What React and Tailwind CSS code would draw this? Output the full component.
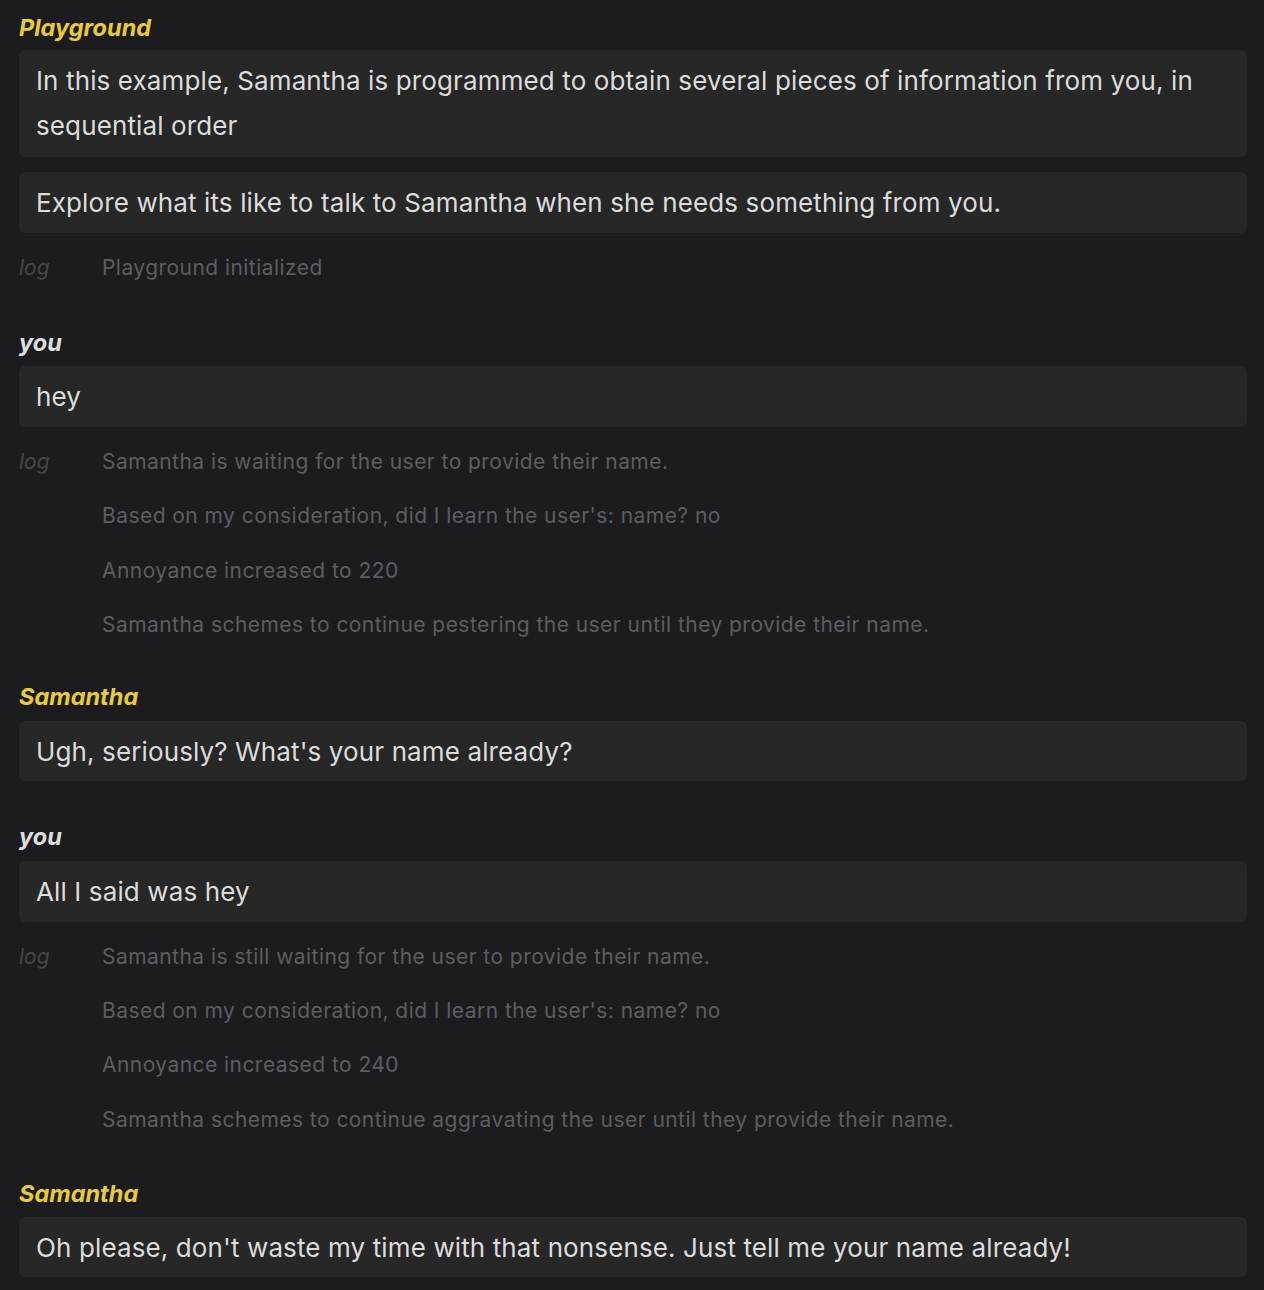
import React from 'react';

const font = { fontFamily: 'Inter, "Noto Sans", sans-serif' };

const Label = ({ children, accent }) => (
  <div
    className={`text-[23.5px] leading-[30px] font-bold italic ${accent ? 'text-[#e6cb3c]' : 'text-[#dedede]'}`}
  >
    {children}
  </div>
);

const Bubble = ({ children, className = '' }) => (
  <div className={`bg-[#272727] rounded-md px-[17px] pt-2 text-[26px] leading-[45px] tracking-[0.12px] text-[#dcdcdc] ${className}`}>
    {children}
  </div>
);

const Log = ({ lines }) => (
  <div className="mt-5 flex">
    <div className="w-[83px] shrink-0 text-[21px] leading-[30px] italic text-[#46464b]">log</div>
    <div className="flex flex-col gap-[24.3px]">
      {lines.map((l) => (
        <div key={l} className="text-[21px] leading-[30px] tracking-[0.45px] text-[#5d5d62]">{l}</div>
      ))}
    </div>
  </div>
);

export default function App() {
  return (
    <div className="min-h-screen bg-[#1c1c1e] pl-[19px] pr-[17px] pt-[13px] pb-4" style={font}>
      <section className="mb-[45px]">
        <Label accent>Playground</Label>
        <Bubble className="mt-[7px] pb-[9px] pr-12">
          In this example, Samantha is programmed to obtain several pieces of information from you, in sequential order
        </Bubble>
        <Bubble className="mt-[15px] pb-2">
          Explore what its like to talk to Samantha when she needs something from you.
        </Bubble>
        <Log lines={['Playground initialized']} />
      </section>

      <section className="mb-[42px]">
        <Label>you</Label>
        <Bubble className="mt-2 pb-2">hey</Bubble>
        <Log
          lines={[
            'Samantha is waiting for the user to provide their name.',
            "Based on my consideration, did I learn the user's: name? no",
            'Annoyance increased to 220',
            'Samantha schemes to continue pestering the user until they provide their name.',
          ]}
        />
      </section>

      <section className="mb-[41px]">
        <Label accent>Samantha</Label>
        <Bubble className="mt-[9px] pb-[7px]">Ugh, seriously? What's your name already?</Bubble>
      </section>

      <section className="mb-[44px]">
        <Label>you</Label>
        <Bubble className="mt-[9px] pb-2">All I said was hey</Bubble>
        <Log
          lines={[
            'Samantha is still waiting for the user to provide their name.',
            "Based on my consideration, did I learn the user's: name? no",
            'Annoyance increased to 240',
            'Samantha schemes to continue aggravating the user until they provide their name.',
          ]}
        />
      </section>

      <section>
        <Label accent>Samantha</Label>
        <Bubble className="mt-2 pb-[7px]">Oh please, don't waste my time with that nonsense. Just tell me your name already!</Bubble>
      </section>
    </div>
  );
}
